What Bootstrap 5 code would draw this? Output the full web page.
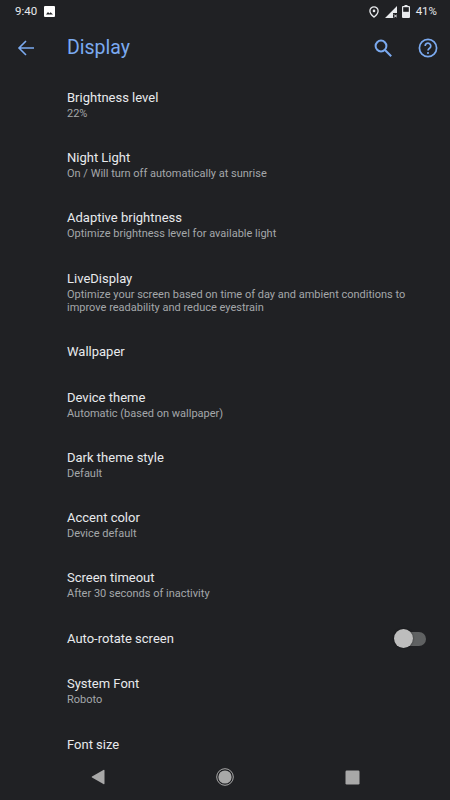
<!DOCTYPE html>
<html lang="en">
<head>
<meta charset="utf-8">
<title>Display</title>
<link href="https://cdn.jsdelivr.net/npm/bootstrap@5.3.0/dist/css/bootstrap.min.css" rel="stylesheet">
<style>
html,body{height:100%;}
body{background:#202124;font-family:Roboto,"Liberation Sans",sans-serif;overflow:hidden;}
.phone{width:450px;height:800px;background:#202124;}
.statusbar{height:23px;padding:0 13px 0 15px;color:#e8eaed;font-size:11.5px;line-height:23px;}
.status-img{margin-left:7px;}
.status-loc{margin-right:6px;}
.status-sig{margin-right:5px;}
.status-bat{margin-right:6px;}
.appbar{height:52px;padding-bottom:2px;color:#7baaf0;}
.back-slot{width:67px;padding-left:17px;}
.screen-title{font-size:19.5px;font-weight:400;margin:0;color:#7baaf0;}
.action-search{margin-right:26px;}
.action-help{margin-right:12px;}
.settings-list{--bs-list-group-bg:transparent;--bs-list-group-border-width:0;--bs-list-group-item-padding-x:0;--bs-list-group-item-padding-y:0;}
.setting-row{padding:0 24px 0 67px!important;min-height:60px;color:#e8eaed;}
.setting-row.single{min-height:47px;}
.setting-row.compact{min-height:46px;padding-top:2px!important;}
.setting-row.triple{min-height:73px;padding-top:1px!important;}
.setting-title{font-size:13px;line-height:16px;color:#e8eaed;}
.setting-sub{font-size:11px;line-height:13px;color:#a4a7aa;margin-top:1px;}
.toggle-wrap{position:relative;width:32px;height:20px;}
.toggle-track{position:absolute;left:8px;top:3px;width:24px;height:14px;border-radius:7px;background:#5f6162;}
.toggle-thumb{position:absolute;left:0;top:0;width:19px;height:19px;border-radius:50%;background:#bdbdbd;box-shadow:0 0 2px rgba(0,0,0,.6);}
.navbar-sys{height:46px;padding:0;}
.navslot{width:127px;}
</style>
</head>
<body>
<div class="phone d-flex flex-column">
  <div class="statusbar d-flex align-items-center flex-shrink-0">
    <span>9:40</span>
    <svg class="status-img" width="11" height="11" viewBox="0 0 11 11"><path fill="#fff" d="M1 0h9a1 1 0 0 1 1 1v9a1 1 0 0 1-1 1H1a1 1 0 0 1-1-1V1a1 1 0 0 1 1-1z"/><path fill="#202124" d="M2 8.5l2-2.6 1.4 1.5 1.2-1.2L9 8.5z"/></svg>
    <div class="ms-auto d-flex align-items-center">
      <svg class="status-loc" width="10" height="12" viewBox="0 0 10 12" fill="none" stroke="#e8eaed" stroke-width="1.3"><path d="M5 .8A4.1 4.1 0 0 0 .9 4.9C.9 7.6 5 11.1 5 11.1s4.1-3.5 4.1-6.2A4.1 4.1 0 0 0 5 .8z"/><circle cx="5" cy="4.9" r="1.3" fill="#e8eaed" stroke="none"/></svg>
      <svg class="status-sig" width="12" height="12" viewBox="0 0 12 12"><path fill="#e8eaed" d="M12 0v7H8v5H0z"/><path stroke="#e8eaed" stroke-width="1" d="M9 8.5l3 3m0-3l-3 3"/></svg>
      <svg class="status-bat" width="8" height="13" viewBox="0 0 8 13"><path fill="#e8eaed" d="M2.5 0h3v1H7a1 1 0 0 1 1 1v10a1 1 0 0 1-1 1H1a1 1 0 0 1-1-1V2a1 1 0 0 1 1-1h1.5z"/><rect x="1.2" y="2.2" width="5.6" height="4.6" fill="#202124"/></svg>
      <span>41%</span>
    </div>
  </div>
  <div class="appbar d-flex align-items-center flex-shrink-0">
    <div class="back-slot d-flex align-items-center">
      <svg width="18" height="18" viewBox="0 0 18 18" fill="none" stroke="#7baaf0" stroke-width="1.6"><path d="M17 9H2M9 2L2 9l7 7"/></svg>
    </div>
    <h1 class="screen-title flex-grow-1">Display</h1>
    <svg class="action-search" width="18" height="18" viewBox="0 0 18 18" fill="none" stroke="#7baaf0" stroke-width="2"><circle cx="7" cy="7" r="5.4"/><path d="M11 11l6.2 6.2"/></svg>
    <svg class="action-help" width="20" height="20" viewBox="0 0 20 20" fill="none" stroke="#7baaf0" stroke-width="1.7"><circle cx="10" cy="10" r="8.6"/><path d="M7.2 8a2.8 2.8 0 1 1 4.4 2.2c-1 .7-1.6 1.1-1.6 2.3"/><circle cx="10" cy="15" r="1.05" fill="#7baaf0" stroke="none"/></svg>
  </div>
  <div class="settings-list list-group list-group-flush flex-grow-1 overflow-hidden">
    <div class="list-group-item setting-row d-flex flex-column justify-content-center"><div class="setting-title">Brightness level</div><div class="setting-sub">22%</div></div>
    <div class="list-group-item setting-row d-flex flex-column justify-content-center"><div class="setting-title">Night Light</div><div class="setting-sub">On / Will turn off automatically at sunrise</div></div>
    <div class="list-group-item setting-row d-flex flex-column justify-content-center"><div class="setting-title">Adaptive brightness</div><div class="setting-sub">Optimize brightness level for available light</div></div>
    <div class="list-group-item setting-row triple d-flex flex-column justify-content-center"><div class="setting-title">LiveDisplay</div><div class="setting-sub">Optimize your screen based on time of day and ambient conditions to improve readability and reduce eyestrain</div></div>
    <div class="list-group-item setting-row single d-flex flex-column justify-content-center"><div class="setting-title">Wallpaper</div></div>
    <div class="list-group-item setting-row d-flex flex-column justify-content-center"><div class="setting-title">Device theme</div><div class="setting-sub">Automatic (based on wallpaper)</div></div>
    <div class="list-group-item setting-row d-flex flex-column justify-content-center"><div class="setting-title">Dark theme style</div><div class="setting-sub">Default</div></div>
    <div class="list-group-item setting-row d-flex flex-column justify-content-center"><div class="setting-title">Accent color</div><div class="setting-sub">Device default</div></div>
    <div class="list-group-item setting-row d-flex flex-column justify-content-center"><div class="setting-title">Screen timeout</div><div class="setting-sub">After 30 seconds of inactivity</div></div>
    <div class="list-group-item setting-row single compact d-flex align-items-center justify-content-between"><div class="setting-title">Auto-rotate screen</div><div class="toggle-wrap"><span class="toggle-track"></span><span class="toggle-thumb"></span></div></div>
    <div class="list-group-item setting-row d-flex flex-column justify-content-center"><div class="setting-title">System Font</div><div class="setting-sub">Roboto</div></div>
    <div class="list-group-item setting-row single d-flex flex-column justify-content-center"><div class="setting-title">Font size</div></div>
  </div>
  <div class="navbar-sys d-flex justify-content-center align-items-center flex-shrink-0">
    <div class="navslot d-flex justify-content-center"><svg width="16" height="16" viewBox="0 0 16 16"><path fill="#a8a8a8" d="M14.5 1.5v13a.7.7 0 0 1-1.1.5L2 8.5a.6.6 0 0 1 0-1L13.4 1a.7.7 0 0 1 1.1.5z"/></svg></div>
    <div class="navslot d-flex justify-content-center"><svg width="18" height="18" viewBox="0 0 18 18"><circle cx="9" cy="9" r="8.3" fill="none" stroke="#a8a8a8" stroke-width="1"/><circle cx="9" cy="9" r="6.6" fill="#a8a8a8"/></svg></div>
    <div class="navslot d-flex justify-content-center"><svg width="15" height="15" viewBox="0 0 15 15"><rect x=".5" y=".5" width="14" height="14" rx="1.2" fill="#a8a8a8"/></svg></div>
  </div>
</div>
<script src="https://cdn.jsdelivr.net/npm/bootstrap@5.3.0/dist/js/bootstrap.bundle.min.js"></script>
</body>
</html>
